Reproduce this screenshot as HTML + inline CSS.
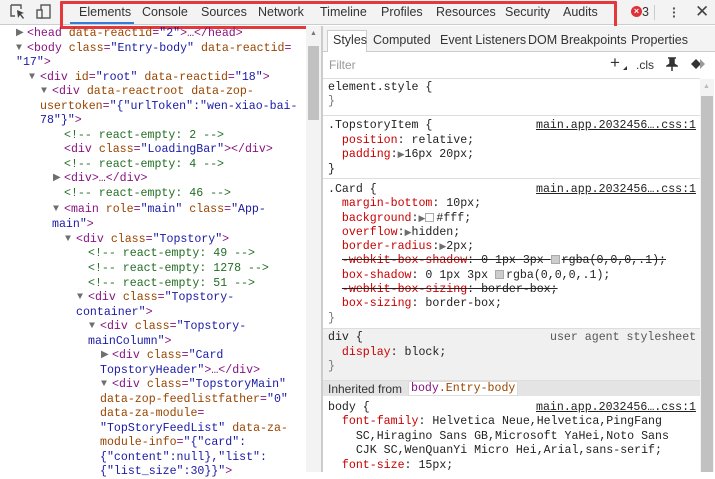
<!DOCTYPE html>
<html><head><meta charset="utf-8"><style>
*{margin:0;padding:0;box-sizing:border-box}
body{width:715px;height:472px;overflow:hidden;background:#fff;font-family:"Liberation Sans",sans-serif;position:relative}
.tb{position:absolute;left:0;top:0;width:715px;height:25px;background:#f3f3f3;border-bottom:1px solid #ccc}
.tab{position:absolute;top:5px;font-size:12.5px;color:#333}
.red{position:absolute;left:60px;top:1px;width:557px;height:28px;border:3px solid #e5383b;border-radius:1px}
.m{font-family:"Liberation Mono",monospace;font-size:11.6px;white-space:pre;position:absolute;line-height:14px}
.t{color:#881280}.a{color:#994500}.v{color:#1a1aa6}.c{color:#236e25}
.p{color:#c80000}.k{color:#222}.lnk{color:#222;text-decoration:underline}
.tri{color:#6e6e6e;font-size:9px}
.L .tr{position:absolute;margin-left:-11px;color:#6e6e6e;font-size:10px;top:0}
.s{text-decoration:line-through}
.sep{position:absolute;left:323px;width:377px;height:1px;background:#ddd}
.sw{display:inline-block;width:9px;height:9px;border:1px solid #aaa;vertical-align:-1px;margin-right:2px}
</style></head><body>
<div class="tb"></div>
<svg style="position:absolute;left:10px;top:4px" width="16" height="16"><path d="M1 1h10v4M1 1v11h4" fill="none" stroke="#555" stroke-width="1.4"/><path d="M7 6l7 3-3 1 3 4-1 1-3-4-2 3z" fill="#444"/></svg>
<svg style="position:absolute;left:36px;top:4px" width="16" height="16"><rect x="5" y="1" width="9" height="13" fill="none" stroke="#555" stroke-width="1.4"/><rect x="1" y="6" width="5" height="8" fill="#f3f3f3" stroke="#555" stroke-width="1.4"/></svg>
<div class="tab" style="left:79px">Elements</div>
<div style="position:absolute;left:70px;top:22px;width:64px;height:2px;background:#3879d9"></div>
<div class="tab" style="left:142px">Console</div>
<div class="tab" style="left:201px">Sources</div>
<div class="tab" style="left:258px">Network</div>
<div class="tab" style="left:320px">Timeline</div>
<div class="tab" style="left:381px">Profiles</div>
<div class="tab" style="left:436px">Resources</div>
<div class="tab" style="left:505px">Security</div>
<div class="tab" style="left:563px">Audits</div>
<div class="red"></div>
<div style="position:absolute;left:631px;top:6px;width:11px;height:11px;border-radius:50%;background:#e0303a;color:#fff;font-size:9px;line-height:11px;text-align:center;font-weight:bold">×</div>
<div class="tab" style="left:642px">3</div>
<div style="position:absolute;left:654px;top:5px;width:1px;height:15px;background:#ccc"></div>
<div style="position:absolute;left:672px;top:6px;font-size:14px;color:#555;line-height:4px;font-weight:bold">·<br>·<br>·</div>
<div style="position:absolute;left:695px;top:2px;font-size:17px;color:#444">✕</div>

<div style="position:absolute;left:306px;top:26px;width:15px;height:446px;background:#f3f3f3"></div>
<div style="position:absolute;left:308px;top:46px;width:11px;height:74px;background:#c1c1c1"></div>
<div style="position:absolute;left:310px;top:30px;font-size:7px;color:#777">▲</div>
<div style="position:absolute;left:321px;top:26px;width:2px;height:446px;background:#ccc"></div>
<div style="position:absolute;left:323px;top:26px;width:392px;height:26px;background:#f3f3f3;border-bottom:1px solid #ccc"></div>

<div class="L">
<div class="m" style="left:27px;top:27px"><span class="tr">▶</span><span class="t">&lt;head</span> <span class="a">data-reactid</span><span class="t">=</span><span class="v">"2"</span><span class="t">&gt;…&lt;/head&gt;</span></div>
<div class="m" style="left:27px;top:41.5px"><span class="tr">▼</span><span class="t">&lt;body</span> <span class="a">class</span><span class="t">=</span><span class="v">"Entry-body"</span> <span class="a">data-reactid</span><span class="t">=</span></div>
<div class="m" style="left:16px;top:56px"><span class="v">"17"</span><span class="t">&gt;</span></div>
<div class="m" style="left:40px;top:70.5px"><span class="tr">▼</span><span class="t">&lt;div</span> <span class="a">id</span><span class="t">=</span><span class="v">"root"</span> <span class="a">data-reactid</span><span class="t">=</span><span class="v">"18"</span><span class="t">&gt;</span></div>
<div class="m" style="left:52px;top:85px"><span class="tr">▼</span><span class="t">&lt;div</span> <span class="a">data-reactroot</span> <span class="a">data-zop-</span></div>
<div class="m" style="left:40px;top:99.5px"><span class="a">usertoken</span><span class="t">=</span><span class="v">"{"urlToken":"wen-xiao-bai-</span></div>
<div class="m" style="left:40px;top:114px"><span class="v">78"}"</span><span class="t">&gt;</span></div>
<div class="m" style="left:64px;top:128.5px"><span class="c">&lt;!-- react-empty: 2 --&gt;</span></div>
<div class="m" style="left:64px;top:143px"><span class="t">&lt;div</span> <span class="a">class</span><span class="t">=</span><span class="v">"LoadingBar"</span><span class="t">&gt;&lt;/div&gt;</span></div>
<div class="m" style="left:64px;top:157.5px"><span class="c">&lt;!-- react-empty: 4 --&gt;</span></div>
<div class="m" style="left:64px;top:172px"><span class="tr">▶</span><span class="t">&lt;div&gt;…&lt;/div&gt;</span></div>
<div class="m" style="left:64px;top:187px"><span class="c">&lt;!-- react-empty: 46 --&gt;</span></div>
<div class="m" style="left:64px;top:203px"><span class="tr">▼</span><span class="t">&lt;main</span> <span class="a">role</span><span class="t">=</span><span class="v">"main"</span> <span class="a">class</span><span class="t">=</span><span class="v">"App-</span></div>
<div class="m" style="left:52px;top:218px"><span class="v">main"</span><span class="t">&gt;</span></div>
<div class="m" style="left:76px;top:232.5px"><span class="tr">▼</span><span class="t">&lt;div</span> <span class="a">class</span><span class="t">=</span><span class="v">"Topstory"</span><span class="t">&gt;</span></div>
<div class="m" style="left:88px;top:247px"><span class="c">&lt;!-- react-empty: 49 --&gt;</span></div>
<div class="m" style="left:88px;top:262px"><span class="c">&lt;!-- react-empty: 1278 --&gt;</span></div>
<div class="m" style="left:88px;top:276.5px"><span class="c">&lt;!-- react-empty: 51 --&gt;</span></div>
<div class="m" style="left:88px;top:291px"><span class="tr">▼</span><span class="t">&lt;div</span> <span class="a">class</span><span class="t">=</span><span class="v">"Topstory-</span></div>
<div class="m" style="left:76px;top:305.5px"><span class="v">container"</span><span class="t">&gt;</span></div>
<div class="m" style="left:100px;top:320px"><span class="tr">▼</span><span class="t">&lt;div</span> <span class="a">class</span><span class="t">=</span><span class="v">"Topstory-</span></div>
<div class="m" style="left:88px;top:334.5px"><span class="v">mainColumn"</span><span class="t">&gt;</span></div>
<div class="m" style="left:112px;top:349px"><span class="tr">▶</span><span class="t">&lt;div</span> <span class="a">class</span><span class="t">=</span><span class="v">"Card</span></div>
<div class="m" style="left:100px;top:363.5px"><span class="v">TopstoryHeader"</span><span class="t">&gt;…&lt;/div&gt;</span></div>
<div class="m" style="left:112px;top:378px"><span class="tr">▼</span><span class="t">&lt;div</span> <span class="a">class</span><span class="t">=</span><span class="v">"TopstoryMain"</span></div>
<div class="m" style="left:100px;top:392.5px"><span class="a">data-zop-feedlistfather</span><span class="t">=</span><span class="v">"0"</span></div>
<div class="m" style="left:100px;top:407px"><span class="a">data-za-module</span><span class="t">=</span></div>
<div class="m" style="left:100px;top:421.5px"><span class="v">"TopStoryFeedList"</span> <span class="a">data-za-</span></div>
<div class="m" style="left:100px;top:436px"><span class="a">module-info</span><span class="t">=</span><span class="v">"{"card":</span></div>
<div class="m" style="left:100px;top:450.5px"><span class="v">{"content":null},"list":</span></div>
<div class="m" style="left:100px;top:465px"><span class="v">{"list_size":30}}"</span><span class="t">&gt;</span></div>
</div>

<div style="position:absolute;left:327px;top:30px;width:40px;height:22px;background:#fff;border:1px solid #ccc;border-bottom:none"></div>
<div class="tab" style="left:333px;top:33px">Styles</div>
<div class="tab" style="left:373px;top:33px">Computed</div>
<div class="tab" style="left:440px;top:33px">Event Listeners</div>
<div class="tab" style="left:528px;top:33px">DOM Breakpoints</div>
<div class="tab" style="left:631px;top:33px">Properties</div>
<div style="position:absolute;left:329px;top:58px;font-size:12px;color:#999">Filter</div>
<div style="position:absolute;left:610px;top:53px;font-size:17px;color:#333">+</div>
<div style="position:absolute;left:623px;top:66px;width:0;height:0;border-left:4px solid transparent;border-bottom:4px solid #333"></div>
<div style="position:absolute;left:636px;top:58px;font-size:12px;color:#333">.cls</div>
<svg style="position:absolute;left:666px;top:57px" width="12" height="14"><path d="M2 1h8M4 1v6L1 9h10L8 7V1M6 9v5" fill="#333" stroke="#333" stroke-width="1.5"/></svg>
<svg style="position:absolute;left:691px;top:58px" width="14" height="12"><path d="M5 1l5 5-5 5-5-5z" fill="#333"/><path d="M9 1l5 5-5 5" fill="#999"/></svg>
<div class="sep" style="top:78px"></div>
<div style="position:absolute;left:700px;top:79px;width:14px;height:393px;background:#f3f3f3"></div>
<div style="position:absolute;left:701px;top:96px;width:12px;height:376px;background:#c1c1c1"></div>
<div style="position:absolute;left:703px;top:83px;font-size:7px;color:#bbb">▲</div>

<div class="m k" style="left:328px;top:81px;color:#777"><span class="k">element.style {</span>
}</div>
<div class="sep" style="top:115px"></div>
<div class="m k" style="left:328px;top:119px;line-height:14.5px">.TopstoryItem {
  <span class="p">position</span>: relative;
  <span class="p">padding</span>:<span class="tri">▶</span>16px 20px;
}</div>
<div class="m lnk" style="left:536px;top:119px">main.app.2032456….css:1</div>
<div class="sep" style="top:178px"></div>
<div class="m k" style="left:328px;top:183px;line-height:14.3px">.Card {
  <span class="p">margin-bottom</span>: 10px;
  <span class="p">background</span>:<span class="tri">▶</span><span class="sw" style="background:#fff"></span>#fff;
  <span class="p">overflow</span>:<span class="tri">▶</span>hidden;
  <span class="p">border-radius</span>:<span class="tri">▶</span>2px;
  <span class="s"><span class="p">-webkit-box-shadow</span>: 0 1px 3px <span class="sw" style="background:#ccc"></span>rgba(0,0,0,.1);</span>
  <span class="p">box-shadow</span>: 0 1px 3px <span class="sw" style="background:#ccc"></span>rgba(0,0,0,.1);
  <span class="s"><span class="p">-webkit-box-sizing</span>: border-box;</span>
  <span class="p">box-sizing</span>: border-box;
<span style="color:#777">}</span></div>
<div class="m lnk" style="left:536px;top:183px">main.app.2032456….css:1</div>
<div class="sep" style="top:328px"></div>
<div style="position:absolute;left:323px;top:329px;width:377px;height:67px;background:#f0f0f0"></div>
<div class="m k" style="left:328px;top:331px;line-height:14.5px">div {
  <span class="p">display</span>: block;
<span style="color:#777">}</span></div>
<div class="m" style="left:550px;top:331px;color:#555">user agent stylesheet</div>
<div style="position:absolute;left:323px;top:380px;width:377px;height:16px;background:#e4e4e4;border-top:1px solid #ddd"></div>
<div style="position:absolute;left:328px;top:382px;font-size:12px;color:#333">Inherited from</div>
<div class="m" style="left:408px;top:381px;background:#fff;border:1px solid #ddd;padding:0 2px;line-height:13px"><span class="t">body</span><span class="a">.Entry-body</span></div>
<div class="m k" style="left:328px;top:401px;line-height:14.4px">body {
  <span class="p">font-family</span>: Helvetica Neue,Helvetica,PingFang
    SC,Hiragino Sans GB,Microsoft YaHei,Noto Sans
    CJK SC,WenQuanYi Micro Hei,Arial,sans-serif;
  <span class="p">font-size</span>: 15px;</div>
<div class="m lnk" style="left:536px;top:401px">main.app.2032456….css:1</div>
</body></html>
